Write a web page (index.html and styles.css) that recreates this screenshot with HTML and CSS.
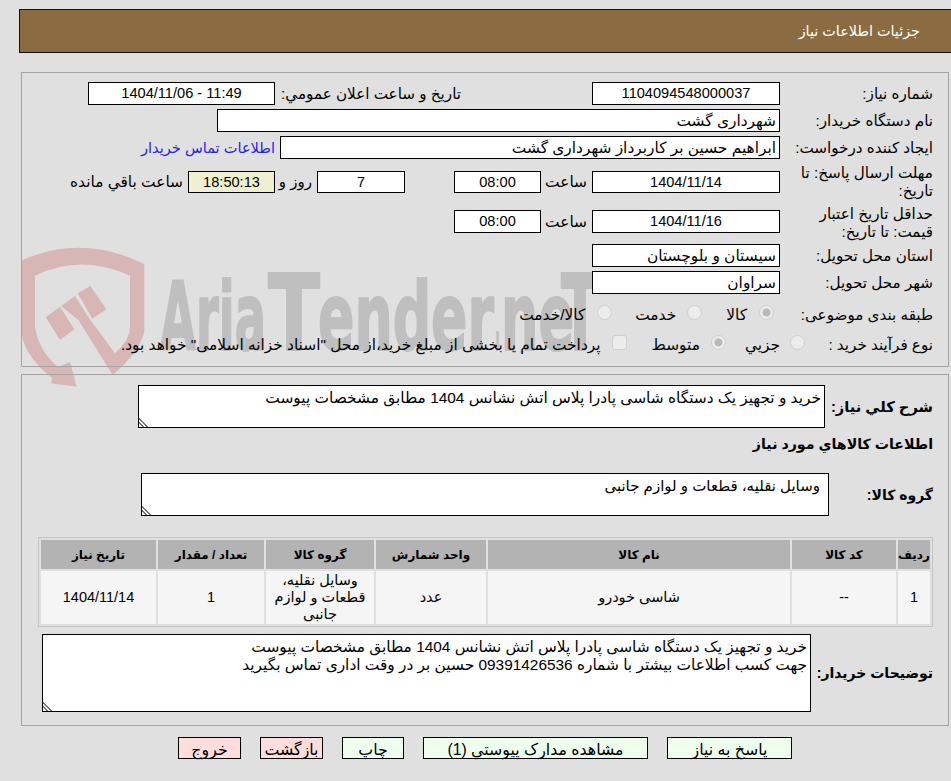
FILE: index.html
```html
<!DOCTYPE html>
<html lang="fa" dir="rtl">
<head>
<meta charset="utf-8">
<title>جزئیات اطلاعات نیاز</title>
<link rel="stylesheet" href="styles.css">
</head>
<body>
<svg class="wm" viewBox="0 0 900 450" aria-hidden="true">
  <path class="wm-red" d="M18 62 Q200 -20 388 72 L388 270 Q380 330 293 405 L190 240 L215 225 L300 340 Q345 300 345 260 L345 107 Q200 40 60 107 L60 260 Q70 330 130 382 L165 365 L185 440 L108 430 L112 415 Q18 340 18 260 Z"/>
  <path class="wm-red" d="M92 232 L135 200 L178 268 L135 300 Z M138 198 L180 168 L222 235 L190 240 Z M188 160 L226 138 L274 208 L232 236 Z"/>
</svg>
<svg class="wm-text" viewBox="0 0 470 90" aria-hidden="true">
  <text x="2" y="78" textLength="106" lengthAdjust="spacingAndGlyphs">Aria</text>
  <text class="big" x="110" y="78" textLength="52" lengthAdjust="spacingAndGlyphs">T</text>
  <text x="160" y="78" textLength="176" lengthAdjust="spacingAndGlyphs">ender</text>
  <text x="337" y="78" textLength="5" lengthAdjust="spacingAndGlyphs">.</text>
  <text x="343" y="78" textLength="73" lengthAdjust="spacingAndGlyphs">ne</text>
  <text class="big" x="403" y="78" textLength="38" lengthAdjust="spacingAndGlyphs">T</text>
</svg>
<div class="page">
  <header class="head">جزئیات اطلاعات نیاز</header>

  <section class="panel p1">
    <div class="row r23">
      <label class="lbl">شماره نیاز:</label>
      <div class="fld w188 c">1104094548000037</div>
      <label class="lbl2">تاریخ و ساعت اعلان عمومي:</label>
      <div class="fld w187 c"><bdi>1404/11/06 - 11:49</bdi></div>
    </div>
    <div class="row r23">
      <label class="lbl">نام دستگاه خریدار:</label>
      <div class="fld w563">شهرداری گشت</div>
    </div>
    <div class="row r23">
      <label class="lbl">ایجاد کننده درخواست:</label>
      <div class="fld w500">ابراهیم حسین بر کاربرداز شهرداری گشت</div>
      <a class="link" href="#">اطلاعات تماس خریدار</a>
    </div>
    <div class="row r37">
      <label class="lbl">مهلت ارسال پاسخ: تا تاریخ:</label>
      <div class="fld w188 h22 c">1404/11/14</div>
      <span class="t5 w41">ساعت</span>
      <div class="fld w87 h22 c">08:00</div>
      <div class="fld w88 h22 c gap49">7</div>
      <span class="t5 w32">روز و</span>
      <div class="fld w87 h22 c timer">18:50:13</div>
      <span class="t5">ساعت باقي مانده</span>
    </div>
    <div class="row r36">
      <label class="lbl low">حداقل تاریخ اعتبار قیمت: تا تاریخ:</label>
      <div class="fld w188 c">1404/11/16</div>
      <span class="t5 w41">ساعت</span>
      <div class="fld w87 c">08:00</div>
    </div>
    <div class="row r23">
      <label class="lbl">استان محل تحویل:</label>
      <div class="fld w188">سیستان و بلوچستان</div>
    </div>
    <div class="row r23">
      <label class="lbl">شهر محل تحویل:</label>
      <div class="fld w188">سراوان</div>
    </div>
    <div class="row r26 first-opt">
      <label class="lbl">طبقه بندی موضوعی:</label>
      <input class="radio m-r1" type="radio" name="a" checked disabled>
      <span class="opt">کالا</span>
      <input class="radio m-r2" type="radio" name="a" disabled>
      <span class="opt">خدمت</span>
      <input class="radio m-r3" type="radio" name="a" disabled>
      <span class="opt">کالا/خدمت</span>
    </div>
    <div class="row r26">
      <label class="lbl">نوع فرآیند خرید :</label>
      <input class="radio m-r4" type="radio" name="b" disabled>
      <span class="opt">جزیي</span>
      <input class="radio m-r5" type="radio" name="b" checked disabled>
      <span class="opt">متوسط</span>
      <input class="check" type="checkbox" disabled>
      <span class="opt">پرداخت تمام یا بخشی از مبلغ خرید،از محل "اسناد خزانه اسلامی" خواهد بود.</span>
    </div>
  </section>

  <section class="panel p2">
    <div class="row desc">
      <label class="lbl b l108">شرح کلي نیاز:</label>
      <textarea class="ta w687" readonly>خرید و تجهیز یک دستگاه شاسی پادرا پلاس اتش نشانس 1404 مطابق مشخصات پیوست</textarea>
    </div>
    <div class="subtitle">اطلاعات کالاهاي مورد نیاز</div>
    <div class="row group">
      <label class="lbl b l104">گروه کالا:</label>
      <textarea class="ta w688 ind" readonly>وسایل نقلیه، قطعات و لوازم جانبی</textarea>
    </div>
    <table class="grid">
      <colgroup>
        <col class="c1"><col class="c2"><col class="c3"><col class="c4"><col class="c5"><col class="c6"><col class="c7">
      </colgroup>
      <thead>
        <tr><th>ردیف</th><th>کد کالا</th><th>نام کالا</th><th>واحد شمارش</th><th>گروه کالا</th><th>تعداد / مقدار</th><th>تاریخ نیاز</th></tr>
      </thead>
      <tbody>
        <tr><td>1</td><td>--</td><td>شاسی خودرو</td><td>عدد</td><td>وسایل نقلیه، قطعات و لوازم جانبی</td><td>1</td><td>1404/11/14</td></tr>
      </tbody>
    </table>
    <div class="row notes">
      <label class="lbl b l122">توضیحات خریدار:</label>
      <textarea class="ta w769" readonly>خرید و تجهیز یک دستگاه شاسی پادرا پلاس اتش نشانس 1404 مطابق مشخصات پیوست
جهت کسب اطلاعات بیشتر با شماره 09391426536 حسین بر در وقت اداری تماس بگیرید</textarea>
    </div>
  </section>

  <div class="actions">
    <button class="btn ok w125" type="button">پاسخ به نیاز</button>
    <button class="btn ok w225" type="button">مشاهده مدارک پیوستي (1)</button>
    <button class="btn ok w62" type="button">چاپ</button>
    <button class="btn no w63" type="button">بازگشت</button>
    <button class="btn no w63" type="button">خروج</button>
  </div>
</div>
</body>
</html>
```

FILE: styles.css
```css
* { box-sizing: border-box; }
html, body { margin: 0; padding: 0; }
body {
  position: relative;
  width: 951px;
  height: 781px;
  overflow: hidden;
  background: #e0e0e0;
  color: #000;
  font-family: "Liberation Sans", "DejaVu Sans", sans-serif;
  font-size: 15.4px;
  line-height: 18px;
}
.wm { position: absolute; left: 15px; top: 240px; width: 300px; height: 150px; z-index: 0; }
.wm-red { fill: #d9b6b6; }
.wm-text { position: absolute; left: 158px; top: 272px; width: 470px; height: 90px; z-index: 0; direction: ltr; }
.wm-text text {
  direction: ltr;
  font-family: "DejaVu Sans", sans-serif;
  font-weight: 700;
  font-size: 94px;
  fill: #bfbfbf;
  stroke: #bfbfbf;
  stroke-width: 2px;
  stroke-linejoin: round;
}
.wm-text .big { font-size: 106px; }
.page { position: relative; z-index: 1; padding-top: 9px; }

.head {
  height: 44px;
  margin-left: 19px;
  border: 1px solid #111;
  border-right: 0;
  background: #8b6c42;
  color: #fff;
  padding: 12px 31px 0 0;
  font-size: 14.4px;
}

.panel { margin: 0 2px 0 0; border: 1px solid #a3a3a3; margin-left: 21px; }
.p1 { margin-top: 19px; height: 295px; padding: 9px 15px 0 0; }
.p2 { margin-top: 7px; height: 352px; padding: 10px 15px 0 0; }

.row { display: flex; align-items: center; margin-bottom: 4px; }
.r23 { height: 23px; }
.r37 { height: 37px; }
.r36 { height: 35px; margin-bottom: 5px; }
.r26 { height: 26px; }
.first-opt { margin-top: 8px; }

.lbl { width: 153px; flex: none; padding-left: 8px; line-height: 18px; font-size: 15.2px; }
.low { margin-top: 2px; }
.lbl2 { width: 181px; flex: none; margin: 0 131px 0 5px; white-space: nowrap; font-size: 15.2px; }
.lbl.b { font-weight: 700; font-size: 14px; }
.l108 { width: 108px; padding-left: 0; }
.lbl.l108 { font-size: 14.7px; }
.l104 { width: 104px; padding-left: 0; }
.l122 { width: 122px; padding-left: 0; }

.fld {
  flex: none;
  height: 23px;
  border: 1px solid #000;
  background: #fff;
  padding: 0 3px;
  line-height: 21px;
  white-space: nowrap;
  overflow: hidden;
}
.c { text-align: center; font-size: 14.6px; }
.h22 { height: 22px; line-height: 20px; }
.w188 { width: 188px; }
.w187 { width: 187px; }
.w563 { width: 563px; }
.w500 { width: 500px; }
.w87 { width: 87px; }
.w88 { width: 88px; }
.w32 { width: 32px; text-align: center; font-size: 15px; }
.w41 { width: 41px; flex: none; text-align: center; }
.gap49 { margin-right: 49px; }
.timer { background: #f0f0d0; }
.t5 { margin: 0 5px; white-space: nowrap; }
.link { margin-right: 5px; color: #2222ee; text-decoration: none; white-space: nowrap; font-size: 14.6px; }

.radio, .check {
  appearance: none;
  -webkit-appearance: none;
  flex: none;
  width: 15px;
  height: 15px;
  margin: 0 0 6px 0;
  background: #ececec;
  border: 1px solid #cfcfcf;
}
.radio { border-radius: 50%; }
.radio:checked { background: radial-gradient(circle, #b9b9b9 0 3.5px, #ececec 4.5px); }
.check { border-radius: 3px; margin-right: 25px; margin-left: 11px; }
.opt { white-space: nowrap; }
.m-r1 { margin-right: 6.5px; margin-left: 11.5px; }
.m-r2 { margin-right: 24.5px; margin-left: 10.5px; }
.m-r3 { margin-right: 23.5px; margin-left: 11.5px; }
.m-r4 { margin-right: -24.5px; margin-left: 9.5px; }
.m-r5 { margin-right: 18.5px; margin-left: 11.5px; }

.desc { height: 43px; margin-bottom: 8px; }
.subtitle { height: 17px; margin-bottom: 20px; font-weight: 700; font-size: 14.2px; line-height: 17px; }
.group { height: 43px; margin-bottom: 21px; }
.notes { height: 78px; margin: 7px 0 0 0; }

.ta {
  flex: none;
  height: 100%;
  border: 1px solid #000;
  border-radius: 0;
  background: #fff;
  padding: 3px 3px;
  margin: 0;
  font: inherit;
  line-height: 18px;
  color: #000;
  outline: 0;
}
.ta::-webkit-resizer {
  background: linear-gradient(45deg, transparent 0 2.5px, #777 2.5px 4px, transparent 4px 5.5px, #777 5.5px 7px, transparent 7px);
}
.w687 { width: 687px; }
.w688 { width: 688px; }
.w769 { width: 769px; }
.ind { padding-right: 8px; font-size: 15px; }

.grid {
  width: 895px;
  border: 1px solid #c4c4c4;
  border-spacing: 2px;
  border-collapse: separate;
  table-layout: fixed;
  font-size: 14.5px;
}
.c1 { width: 32px; } .c2 { width: 104px; } .c3 { width: 302px; }
.c4 { width: 110px; } .c5 { width: 108px; } .c6 { width: 106px; } .c7 { width: 115px; }
.grid th {
  height: 29px;
  padding: 0;
  background: #b3b3b3;
  font-weight: 700;
  font-size: 12px;
  text-align: center;
}
.grid td {
  height: 53px;
  padding: 0 2px;
  background: #f5f5f5;
  text-align: center;
  line-height: 17px;
}

.actions { display: flex; gap: 19px; margin: 11px 159px 0 0; }
.btn {
  height: 22px;
  padding: 3px 0 0;
  border: 1px solid #000;
  border-radius: 0;
  color: #000;
  font: inherit;
  font-size: 15.8px;
  line-height: 18px;
}
.ok { background: #eeffee; }
.no { background: #ffdddd; }
.w125 { width: 125px; }
.w225 { width: 225px; }
.w62 { width: 62px; }
.w63 { width: 63px; }
```
